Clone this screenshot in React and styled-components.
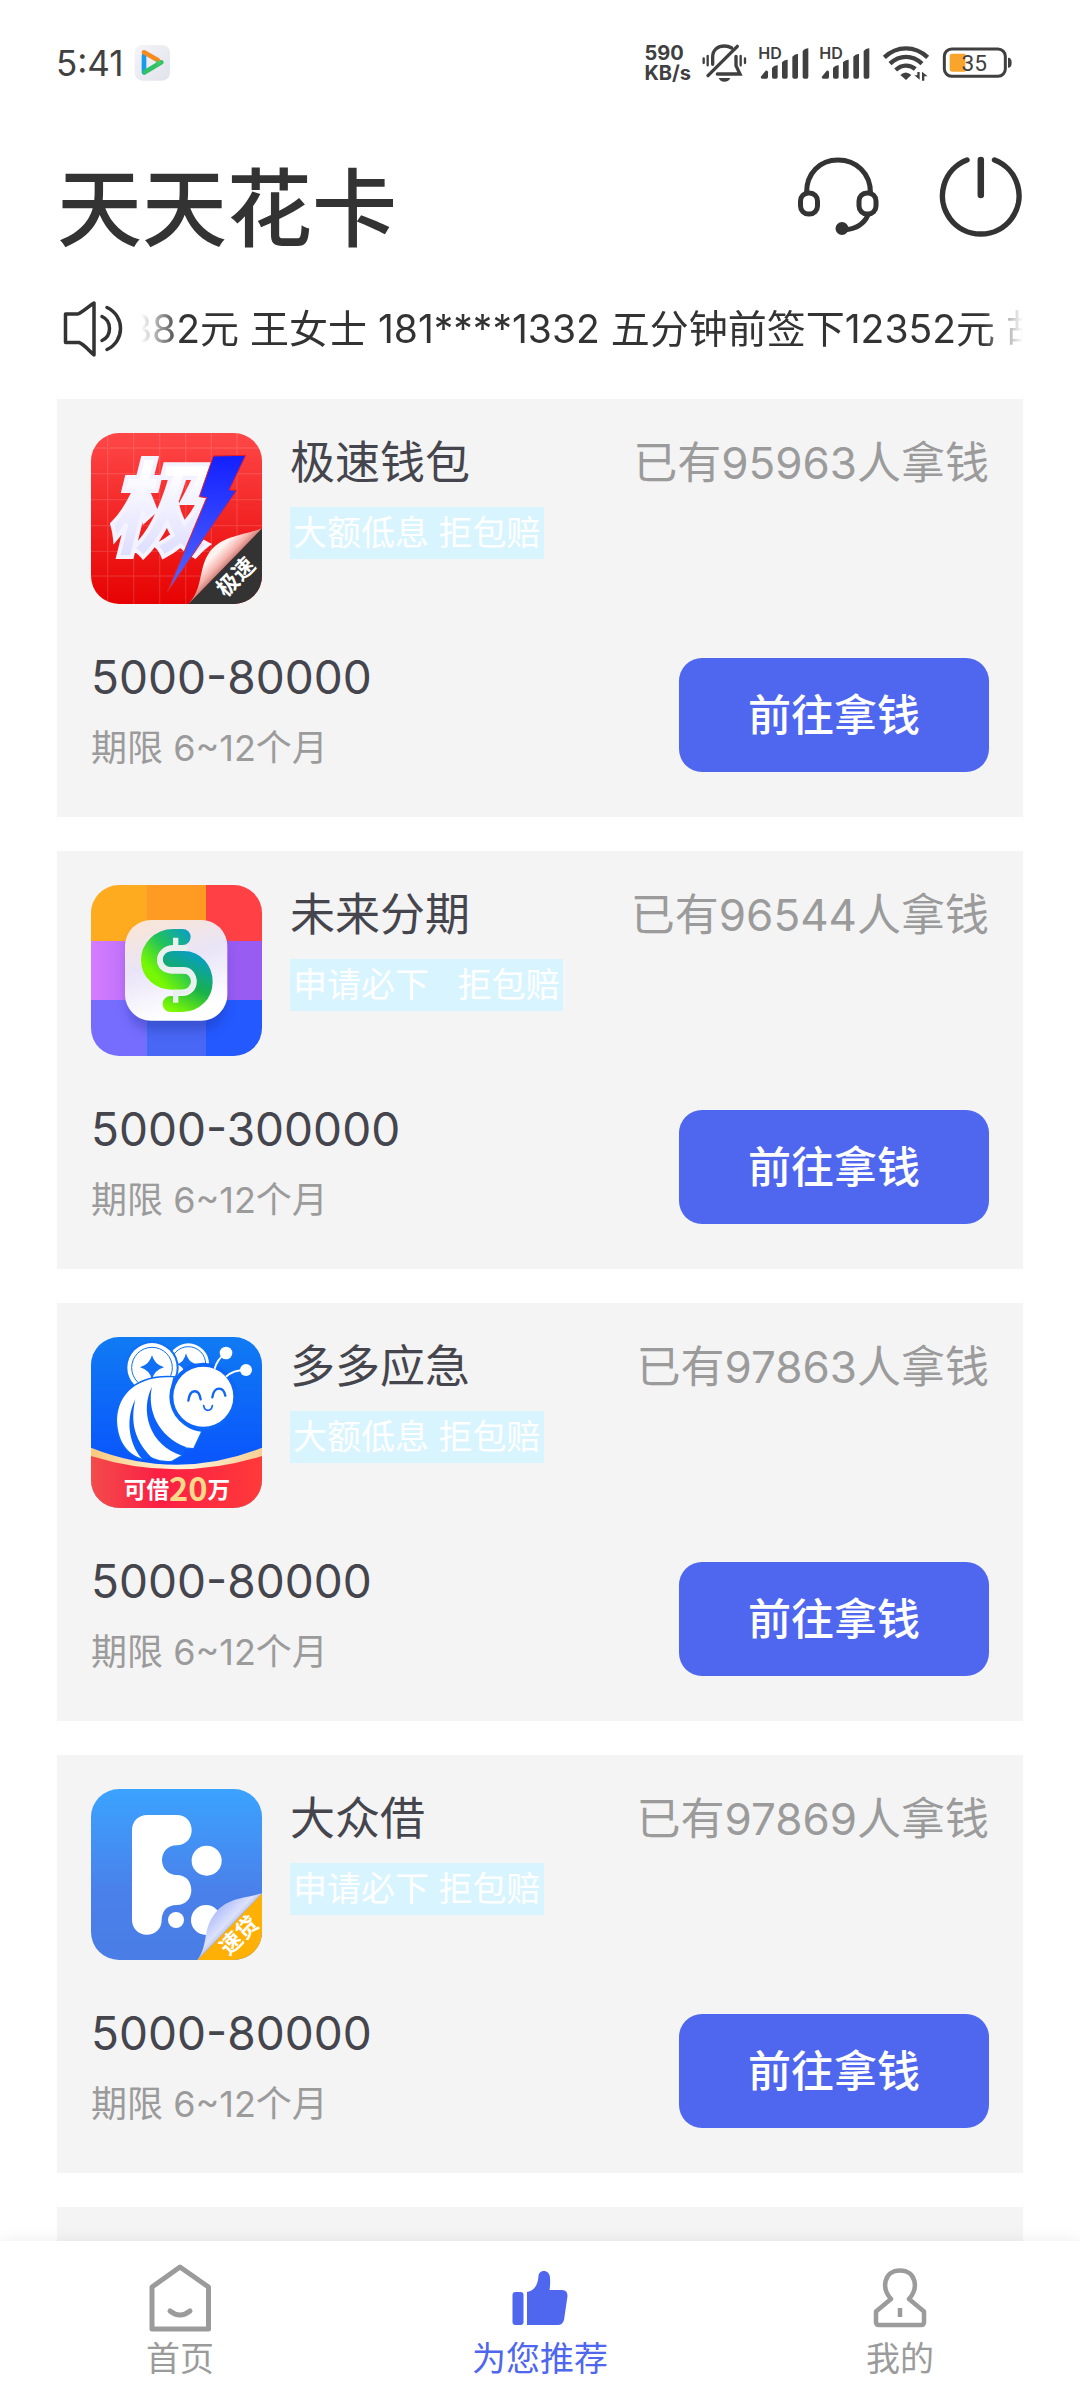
import React from "react";
import styled, { createGlobalStyle } from "styled-components";

const loans = [
  {
    name: "极速钱包",
    tag: "大额低息 拒包赔",
    people: 95963,
    amount: "5000-80000",
    Logo: JisuLogo,
  },
  {
    name: "未来分期",
    tag: "申请必下   拒包赔",
    people: 96544,
    amount: "5000-300000",
    Logo: WeilaiLogo,
  },
  {
    name: "多多应急",
    tag: "大额低息 拒包赔",
    people: 97863,
    amount: "5000-80000",
    Logo: DuoduoLogo,
  },
  {
    name: "大众借",
    tag: "申请必下 拒包赔",
    people: 97869,
    amount: "5000-80000",
    Logo: DazhongLogo,
  },
];

function App() {
  return (
    <Page>
      <GlobalStyle />
      <StatusBar />
      <Header>
        <Title>天天花卡</Title>
        <Actions>
          <IconButton aria-label="客服">
            <HeadsetIcon />
          </IconButton>
          <IconButton aria-label="退出">
            <PowerIcon />
          </IconButton>
        </Actions>
      </Header>
      <Notice>
        <SpeakerIcon />
        <Ticker>382元 王女士 181****1332 五分钟前签下12352元 胡</Ticker>
      </Notice>
      <List>
        {loans.map((loan) => (
          <LoanCard key={loan.name} {...loan} />
        ))}
        <Card />
      </List>
      <Nav>
        <NavItem href="#home">
          <HomeIcon />
          首页
        </NavItem>
        <NavItem href="#recommend" $active>
          <ThumbIcon />
          为您推荐
        </NavItem>
        <NavItem href="#me">
          <UserIcon />
          我的
        </NavItem>
      </Nav>
    </Page>
  );
}
export default App;

function LoanCard({ name, tag, people, amount, Logo }) {
  return (
    <Card>
      <CardHead>
        <Logo />
        <Info>
          <Name>{name}</Name>
          <Tag>{tag}</Tag>
        </Info>
        <People>已有{people}人拿钱</People>
      </CardHead>
      <CardFoot>
        <div>
          <Amount>{amount}</Amount>
          <Term>期限 6~12个月</Term>
        </div>
        <Button>前往拿钱</Button>
      </CardFoot>
    </Card>
  );
}

function StatusBar() {
  return (
    <Status>
      <StatusGroup>
        <Time>5:41</Time>
        <svg width="37" height="40" viewBox="280 40 111 120">
          <defs>
            <linearGradient id="playBg" x1="0" y1="0" x2="1" y2="1">
              <stop offset="0" stopColor="#f4f4f8" />
              <stop offset="1" stopColor="#e2e2ec" />
            </linearGradient>
          </defs>
          <rect x="282" y="46" width="106" height="107" rx="24" fill="url(#playBg)" />
          <g fill="none" strokeWidth="14" strokeLinecap="round">
            <path d="M310 78V128" stroke="#189be8" />
            <path d="M312 128L362 98" stroke="#2fc163" />
            <path d="M310 68L352 92" stroke="#f58a1f" />
          </g>
          <path d="M345 92L366 98L350 110Z" fill="#3cc86b" />
        </svg>
      </StatusGroup>
      <StatusGroup>
        <Speed>
          <span>590</span>
          <span>KB/s</span>
        </Speed>
        <svg width="47" height="40" viewBox="215 40 141 120">
          <g fill="none" stroke="#404040" strokeWidth="10" strokeLinecap="round">
            <path d="M223 86V100M235 79V107M334 79V107M347 86V100" strokeWidth="7" />
            <path d="M250 104V82C250 60 266 49 285 49C294 49 301 51 307 55" />
            <path d="M236 138L324 50" />
            <path d="M320 80V108L332 133H264" />
          </g>
          <path d="M268 145H303Q299 156 285 156Q272 156 268 145Z" fill="#404040" />
        </svg>
        <SignalIcon />
        <SignalIcon />
        <svg width="50" height="40" viewBox="747 40 150 120">
          <g fill="none" stroke="#404040" strokeWidth="13">
            <path d="M760 83C798 47 852 47 890 83" />
            <path d="M777 102C806 75 844 75 873 102" />
            <path d="M794 121C812 104 836 104 853 118" />
          </g>
          <path d="M808 136Q824 121 841 136L825 151Z" fill="#404040" />
          <path
            d="M866 127V150L850 137H859V127ZM873 153V126L890 140H880V153Z"
            fill="#404040"
          />
        </svg>
        <svg width="73" height="40" viewBox="930 40 219 120">
          <rect x="943" y="58" width="183" height="82" rx="22" fill="none" stroke="#404040" strokeWidth="9" />
          <path d="M967 72H1006V126H967Q959 126 959 118V80Q959 72 967 72Z" fill="#f9a52b" />
          <path d="M1134 84Q1145 84 1145 99Q1145 114 1134 114Z" fill="#404040" />
          <text x="1033" y="123" fontSize="68" textAnchor="middle" fontFamily="Roboto, sans-serif" fill="#404040">
            35
          </text>
        </svg>
      </StatusGroup>
    </Status>
  );
}

function SignalIcon() {
  return (
    <svg width="51" height="40" viewBox="385 40 153 120">
      <text x="386" y="87" fontSize="48" fontWeight="600" fontFamily="Inter, sans-serif" fill="#404040">
        HD
      </text>
      <g fill="#404040">
        <path d="M393 142L408 123Q415 121 415 128V142Q415 147 410 147H398Q393 147 393 142Z" />
        <path d="M427 115Q434 106 444 107V142Q444 147 439 147H432Q427 147 427 142Z" />
        <path d="M457 98Q464 89 474 90V142Q474 147 469 147H462Q457 147 457 142Z" />
        <path d="M488 81Q495 72 505 73V142Q505 147 500 147H493Q488 147 488 142Z" />
        <path d="M519 64Q526 55 536 56V142Q536 147 531 147H524Q519 147 519 142Z" />
      </g>
    </svg>
  );
}

function HeadsetIcon() {
  return (
    <svg width="84" height="82" viewBox="796 156 84 82" fill="none" stroke="#333" strokeWidth="5">
      <path d="M806.5 193C806.5 173 820 160 838 160S870.5 173 870.5 193" />
      <rect x="800.5" y="193" width="17" height="21" rx="8" />
      <rect x="859" y="193" width="17" height="21" rx="8" />
      <path d="M868 215C864 224 856 229 844 230" />
      <circle cx="842" cy="228.5" r="6.5" fill="#333" stroke="none" />
    </svg>
  );
}

function PowerIcon() {
  return (
    <svg width="84" height="82" viewBox="939 156 84 82" fill="none" stroke="#333" strokeLinecap="round">
      <path d="M967 160A38.300 38.300 0 1 0 994.500 160" strokeWidth="5.500" />
      <path d="M980.800 160V195" strokeWidth="6.500" />
    </svg>
  );
}

function SpeakerIcon() {
  return (
    <svg width="60" height="58" viewBox="63 301 60 58" fill="none" stroke="#333" strokeWidth="3.500" strokeLinecap="round" strokeLinejoin="round">
      <path d="M65.500 315H78C83 313 89 307 94 304V356C89 352 84 345 79 343.500H65.500Z" />
      <path d="M102 317.500C112 322 112 337 102 341.500" />
      <path d="M107 308.500C125 317 125 342 107 350.500" />
    </svg>
  );
}

function HomeIcon() {
  return (
    <svg width="72" height="76" viewBox="0 0 72 76" fill="none" stroke="#9b9b9b" strokeWidth="5" strokeLinejoin="round">
      <path d="M36 7L64.500 27V69H8V27Z" />
      <path d="M26 51Q36 59 46 51" strokeLinecap="round" />
    </svg>
  );
}

function ThumbIcon() {
  return (
    <svg width="72" height="76" viewBox="0 0 72 76" fill="#4f66ee">
      <rect x="8.500" y="32" width="11" height="33" rx="3" />
      <path d="M23 32C30 31 34 25 34.500 16C35 9 46 9 46 18Q46.500 24 45.500 30H58Q63.500 30 63.500 36L60 60Q58.500 65 54 65H23Z" />
    </svg>
  );
}

function UserIcon() {
  return (
    <svg width="72" height="76" viewBox="0 0 72 76" fill="none" stroke="#9b9b9b" strokeWidth="4.500" strokeLinejoin="round">
      <path d="M27 39C17 28 20 10.500 36 10.500S55 28 45 39L60 51.500V62Q60 65 57 65H15Q12 65 12 62V51.500Z" />
      <path d="M36 48V57" />
    </svg>
  );
}

function JisuLogo() {
  return (
    <Logo viewBox="33 39 513 513">
      <defs>
        <linearGradient id="jsBg" x1="0" y1="0" x2="0" y2="1">
          <stop offset="0" stopColor="#ff4747" />
          <stop offset="1" stopColor="#e60202" />
        </linearGradient>
        <linearGradient id="jsText" x1="0" y1="0" x2="0" y2="1">
          <stop offset="0.300" stopColor="#fff" />
          <stop offset="1" stopColor="#d5d5ff" />
        </linearGradient>
        <linearGradient id="jsBolt" x1="0" y1="0" x2="0" y2="1">
          <stop offset="0" stopColor="#1320ff" />
          <stop offset="1" stopColor="#5468ff" />
        </linearGradient>
        <linearGradient id="jsCurl" x1="0.350" y1="0.350" x2="0.600" y2="0.600">
          <stop offset="0" stopColor="#fff3f0" />
          <stop offset="0.400" stopColor="#f6b0aa" />
          <stop offset="1" stopColor="#70302e" />
        </linearGradient>
      </defs>
      <rect x="33" y="39" width="513" height="513" fill="url(#jsBg)" />
      <path
        d="M83 39V552M161 39V552M239 39V552M317 39V552M394 39V552M471 39V552M33 84H546M33 161H546M33 239H546M33 317H546M33 394H546M33 468H546"
        stroke="#fff"
        strokeOpacity="0.120"
        strokeWidth="4"
      />
      <text
        x="76"
        y="380"
        fontSize="312"
        fontWeight="900"
        fontStyle="italic"
        fontFamily="'Noto Sans CJK SC', sans-serif"
        fill="url(#jsText)"
        stroke="#f3f2ff"
        strokeWidth="12"
      >
        极
      </text>
      <path d="M400 108L497 106L448 210L470 211L262 516L380 233L358 230Z" fill="url(#jsBolt)" stroke="#e82020" strokeWidth="3" />
      <path d="M546 325L325 552H546Z" fill="#333" />
      <path d="M325 552C370 505 355 450 385 402C420 345 500 345 546 325Z" fill="url(#jsCurl)" />
      <text
        x="467"
        y="494"
        transform="rotate(-45 467 470)"
        fontSize="66"
        fontWeight="700"
        textAnchor="middle"
        fontFamily="'Noto Sans CJK SC', sans-serif"
        fill="#fff"
      >
        极速
      </text>
    </Logo>
  );
}

function WeilaiLogo() {
  return (
    <Logo viewBox="33 45 513 513">
      <defs>
        <linearGradient id="wlTile" x1="0" y1="0" x2="0.300" y2="1">
          <stop offset="0" stopColor="#fbe6d2" />
          <stop offset="0.500" stopColor="#e9e4f8" />
          <stop offset="1" stopColor="#fff" />
        </linearGradient>
        <linearGradient id="wlTop" gradientUnits="userSpaceOnUse" x1="330" y1="190" x2="210" y2="300">
          <stop offset="0" stopColor="#0c9fc0" />
          <stop offset="0.500" stopColor="#22c25a" />
          <stop offset="1" stopColor="#77f802" />
        </linearGradient>
        <linearGradient id="wlBottom" gradientUnits="userSpaceOnUse" x1="350" y1="260" x2="275" y2="420">
          <stop offset="0" stopColor="#0a9fba" />
          <stop offset="0.500" stopColor="#18b14a" />
          <stop offset="1" stopColor="#7cfa02" />
        </linearGradient>
        <linearGradient id="wlPurple" x1="0" y1="0" x2="1" y2="0">
          <stop offset="0" stopColor="#d67cff" />
          <stop offset="1" stopColor="#b06cf5" />
        </linearGradient>
        <filter id="wlBlur" x="-30%" y="-30%" width="160%" height="160%">
          <feGaussianBlur stdDeviation="16" />
        </filter>
      </defs>
      <rect x="33" y="45" width="167" height="168" fill="#ffab20" />
      <rect x="199" y="45" width="180" height="168" fill="#ff9a22" />
      <rect x="378" y="45" width="168" height="168" fill="#ff4146" />
      <rect x="33" y="213" width="167" height="178" fill="url(#wlPurple)" />
      <rect x="199" y="213" width="347" height="178" fill="#985cf2" />
      <rect x="33" y="390" width="167" height="168" fill="#766dff" />
      <rect x="199" y="390" width="180" height="168" fill="#4967f5" />
      <rect x="378" y="390" width="168" height="168" fill="#2459ff" />
      <rect x="145" y="180" width="290" height="300" rx="70" fill="#1d2d90" opacity="0.350" filter="url(#wlBlur)" />
      <rect x="135" y="150" width="307" height="302" rx="78" fill="url(#wlTile)" />
      <g fill="none" strokeWidth="48" strokeLinecap="round">
        <path d="M308 201H280C235 201 207 237 207 270C207 310 240 335 275 335H315" stroke="url(#wlTop)" />
        <path d="M272 267H310C350 267 374 300 374 335C374 372 346 402 306 402H272" stroke="url(#wlBottom)" />
      </g>
      <path
        d="M287 203V233M322 235H280C228 235 225 301 278 301H302C355 301 353 367 302 367H287V398"
        fill="none"
        stroke="#e9f1ef"
        strokeWidth="16"
      />
    </Logo>
  );
}

function DuoduoLogo() {
  return (
    <Logo viewBox="33 51 513 513">
      <defs>
        <linearGradient id="ddBg" x1="0" y1="0" x2="0" y2="1">
          <stop offset="0" stopColor="#107bf3" />
          <stop offset="0.700" stopColor="#0a57fc" />
        </linearGradient>
        <linearGradient id="ddRed" x1="0" y1="0" x2="1" y2="0">
          <stop offset="0" stopColor="#f34b4b" />
          <stop offset="0.400" stopColor="#fb1f44" />
          <stop offset="1" stopColor="#ff3a3a" />
        </linearGradient>
        <linearGradient id="ddGold" x1="0" y1="0" x2="1" y2="0">
          <stop offset="0" stopColor="#f8c87c" />
          <stop offset="0.500" stopColor="#fff6e0" />
          <stop offset="1" stopColor="#f6cf94" />
        </linearGradient>
      </defs>
      <rect x="33" y="51" width="513" height="513" fill="url(#ddBg)" />
      <circle cx="325" cy="132" r="62" fill="#fff" />
      <circle cx="325" cy="132" r="52" fill="none" stroke="#0f70f5" strokeWidth="3" />
      <path d="M318 100Q324 128 352 133Q324 138 318 170Q312 138 290 133Q312 128 318 100Z" fill="#0f70f5" />
      <circle cx="216" cy="143" r="80" fill="#0f70f5" />
      <circle cx="216" cy="143" r="74" fill="#fff" />
      <circle cx="216" cy="143" r="61" fill="none" stroke="#0f70f5" strokeWidth="3" />
      <path d="M216 106Q224 134 252 142Q224 150 216 178Q208 150 180 142Q208 134 216 106Z" fill="#0f70f5" />
      <path
        d="M280 172C165 165 105 230 112 315C118 375 150 405 188 416L205 405C225 420 255 425 275 422L305 405L312 382L340 384L363 335C300 330 255 260 280 172Z"
        fill="#fff"
        stroke="#0d6af7"
        strokeWidth="8"
        paintOrder="stroke"
      />
      <path d="M166 238C130 310 155 385 189 420L212 410C165 360 150 310 166 238Z" fill="#0b61fa" />
      <path d="M216 200C180 270 205 375 307 407L318 381C235 350 200 270 216 200Z" fill="#0b61fa" />
      <circle cx="370" cy="230" r="102" fill="#0c66f8" />
      <circle cx="370" cy="230" r="90" fill="#fff" />
      <g fill="none" stroke="#fff" strokeWidth="6">
        <path d="M404 146Q412 118 434 102" />
        <path d="M438 170Q460 150 495 150" />
      </g>
      <circle cx="438" cy="99" r="19" fill="#fff" />
      <circle cx="498" cy="150" r="18" fill="#fff" />
      <g fill="none" stroke="#0c66f8" strokeLinecap="round">
        <path d="M325 242C330 205 357 205 362 238" strokeWidth="7" />
        <path d="M397 232C402 198 430 198 436 227" strokeWidth="7" />
        <path d="M371 257C374 276 394 275 397 257" strokeWidth="5" />
      </g>
      <path d="M33 383Q290 485 546 383V564H33Z" fill="url(#ddGold)" />
      <path d="M33 408Q290 488 546 408V564H33Z" fill="url(#ddRed)" />
      <text x="291" y="533" textAnchor="middle" fontSize="68" fontWeight="700" fontFamily="'Noto Sans CJK SC', sans-serif" fill="#fff">
        可借
        <tspan fontSize="98" fill="#fbd98a" dy="10">
          20
        </tspan>
        <tspan dy="-10">万</tspan>
      </text>
    </Logo>
  );
}

function DazhongLogo() {
  return (
    <Logo viewBox="33 57 513 513">
      <defs>
        <linearGradient id="dzBg" x1="0" y1="0" x2="0" y2="1">
          <stop offset="0" stopColor="#3ba3ff" />
          <stop offset="0.600" stopColor="#4a80ea" />
          <stop offset="1" stopColor="#4a7de6" />
        </linearGradient>
        <linearGradient id="dzCurl" x1="0.300" y1="0.300" x2="0.600" y2="0.600">
          <stop offset="0" stopColor="#b9c4fb" />
          <stop offset="0.500" stopColor="#dce2fb" />
          <stop offset="1" stopColor="#8d95c4" />
        </linearGradient>
      </defs>
      <rect x="33" y="57" width="513" height="513" fill="url(#dzBg)" />
      <path
        d="M201 135H290C320 135 335 158 335 181C335 205 318 226 290 226C262 226 246 248 246 270C246 295 265 315 290 315C318 315 334 335 334 360C334 385 318 405 290 405C260 405 245 425 245 450C245 478 225 494 200 494C175 494 156 475 156 450V180C156 155 175 135 201 135Z"
        fill="#fff"
      />
      <circle cx="380" cy="272" r="45" fill="#fff" />
      <circle cx="288" cy="450" r="24" fill="#fff" />
      <circle cx="378" cy="450" r="45" fill="#fff" />
      <path d="M546 370L352 570H546Z" fill="#ffb005" />
      <path d="M352 570C385 525 368 485 398 440C435 380 500 385 546 370Z" fill="url(#dzCurl)" />
      <text
        x="477"
        y="520"
        transform="rotate(-45 477 496)"
        fontSize="66"
        fontWeight="700"
        textAnchor="middle"
        fontFamily="'Noto Sans CJK SC', sans-serif"
        fill="#fff"
      >
        速贷
      </text>
    </Logo>
  );
}

const GlobalStyle = createGlobalStyle`
  * {
    box-sizing: border-box;
  }
  body {
    margin: 0;
    background: #ffffff;
    font-family: Inter, "Noto Sans CJK SC", sans-serif;
  }
  svg {
    display: block;
    flex-shrink: 0;
  }
`;

const Page = styled.div`
  display: flex;
  flex-direction: column;
  height: 100vh;
  overflow: hidden;
`;

const Status = styled.div`
  display: flex;
  align-items: center;
  justify-content: space-between;
  min-height: 126px;
  padding: 0 67px 0 56px;
  color: #404040;
`;

const StatusGroup = styled.div`
  display: flex;
  align-items: center;
  gap: 10px;
`;

const Time = styled.span`
  font-size: 35px;
  line-height: 40px;
`;

const Speed = styled.span`
  display: flex;
  flex-direction: column;
  font-size: 20px;
  font-weight: 700;
  line-height: 20px;
`;

const Header = styled.header`
  display: flex;
  justify-content: space-between;
  align-items: flex-start;
  padding: 30px 57px 0;
`;

const Title = styled.h1`
  margin: 0;
  color: #333333;
  font-size: 85px;
  font-weight: 500;
  line-height: 108px;
`;

const Actions = styled.div`
  display: flex;
  gap: 59px;
`;

const IconButton = styled.button`
  padding: 0;
  border: none;
  background: none;
`;

const Notice = styled.div`
  display: flex;
  align-items: center;
  gap: 18px;
  margin-top: 36px;
  padding: 0 57px 0 63px;
`;

const Ticker = styled.p`
  flex: 1;
  min-width: 0;
  margin: 0;
  overflow: hidden;
  white-space: nowrap;
  text-indent: -13px;
  color: #333333;
  font-size: 39px;
  line-height: 56px;
  mask-image: linear-gradient(
    to right,
    transparent,
    #000 40px,
    #000 calc(100% - 40px),
    transparent
  );
`;

const List = styled.main`
  flex: 1;
  min-height: 0;
  display: flex;
  flex-direction: column;
  gap: 34px;
  padding: 41px 57px 0;
  overflow: hidden;
`;

const Card = styled.section`
  flex-shrink: 0;
  min-height: 418px;
  padding: 34px 34px 45px;
  background: #f4f4f4;
`;

const CardHead = styled.div`
  display: flex;
  align-items: flex-start;
`;

const Logo = styled.svg`
  width: 171px;
  height: 171px;
  border-radius: 28px;
`;

const Info = styled.div`
  display: flex;
  flex-direction: column;
  align-items: flex-start;
  gap: 14px;
  margin-left: 28px;
`;

const Name = styled.h2`
  margin: 0;
  color: #45454d;
  font-size: 45px;
  font-weight: 400;
  line-height: 60px;
`;

const Tag = styled.span`
  padding: 0 3px;
  background: #d8f5ff;
  color: #ffffff;
  font-size: 34px;
  line-height: 52px;
  white-space: pre;
`;

const People = styled.span`
  margin-left: auto;
  color: #9b9b9b;
  font-size: 44px;
  line-height: 60px;
`;

const CardFoot = styled.div`
  display: flex;
  justify-content: space-between;
  align-items: flex-end;
  margin-top: 44px;
`;

const Amount = styled.div`
  margin-bottom: 18px;
  color: #45454d;
  font-size: 46px;
  line-height: 58px;
`;

const Term = styled.div`
  color: #9b9b9b;
  font-size: 36px;
  line-height: 48px;
`;

const Button = styled.button`
  width: 310px;
  height: 114px;
  padding: 0 0 6px;
  border: none;
  border-radius: 23px;
  background: #4f66ee;
  color: #ffffff;
  font-family: inherit;
  font-size: 43px;
  font-weight: 500;
`;

const Nav = styled.nav`
  position: relative;
  display: flex;
  padding: 19px 0 18px;
  background: #ffffff;
  box-shadow: 0 0 16px rgba(0, 0, 0, 0.08);
`;

const NavItem = styled.a`
  flex: 1;
  display: flex;
  flex-direction: column;
  align-items: center;
  color: ${(props) => (props.$active ? "#4f66ee" : "#9b9b9b")};
  font-size: 34px;
  line-height: 46px;
  text-decoration: none;
`;
